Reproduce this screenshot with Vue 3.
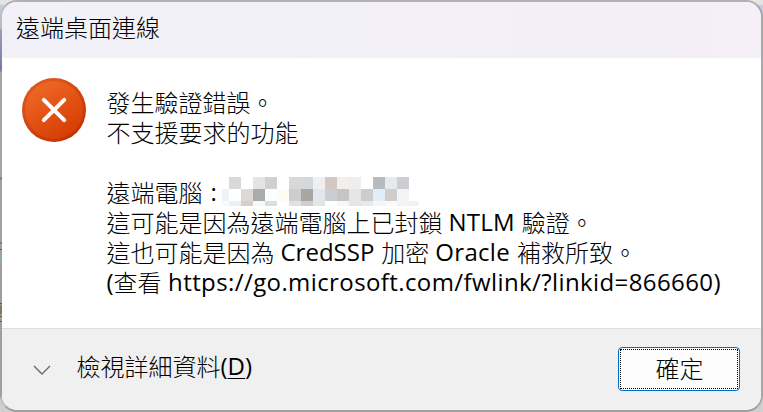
<script setup>
const mosaic = [
  ['#fff', '#d8d9db', '#fff', '#e4e4e4', '#cfd0d2', '#fff', '#d9d8d7', '#d5d8db', '#efefef', '#d3c8c3', '#f2f0ee', '#eeeeee', '#fff', '#b7bbbf', '#e8e9eb', '#cdced1', '#fff'],
  ['#eef3f7', '#fff', '#dbdad6', '#a9abad', '#fafeff', '#fffaf2', '#cbcdcf', '#a9a6a0', '#e1e7ec', '#cbcdd0', '#c6c5c1', '#e6e6e6', '#cccdcf', '#e0eef7', '#cfcec9', '#f2f3f4', '#fff'],
  ['#fafafa', '#edf1f4', '#d5d0ce', '#f8f8fa', '#dddddd', '#fff', '#e3e0df', '#cfd0cd', '#e2e4e6', '#fff', '#f7f7f7', '#e6e6e6', '#e9e9e9', '#f5f5f6', '#fafafa', '#f3f4f5', '#f2f2f2'],
].flat()
</script>

<template>
  <div class="desktop">
    <section class="dialog" role="alertdialog">
      <header class="titlebar">遠端桌面連線</header>
      <main class="body">
        <svg class="error-icon" viewBox="0 0 64 64">
          <defs>
            <linearGradient id="disc" x1="0.2" y1="0" x2="0.8" y2="1">
              <stop offset="0" stop-color="#ef6a28" />
              <stop offset="1" stop-color="#d63a00" />
            </linearGradient>
            <linearGradient id="rim" x1="0.2" y1="0" x2="0.8" y2="1">
              <stop offset="0" stop-color="#df5b20" />
              <stop offset="1" stop-color="#bf3003" />
            </linearGradient>
          </defs>
          <circle cx="32" cy="32" r="32" fill="url(#rim)" />
          <circle cx="32" cy="32" r="29" fill="url(#disc)" />
          <path d="M21.8 21.8 42.2 42.2M42.2 21.8 21.8 42.2" stroke="#fff" stroke-width="4" stroke-linecap="round" />
        </svg>
        <div class="message">
          <p>發生驗證錯誤<span class="stop">。</span></p>
          <p>不支援要求的功能</p>
          <p></p>
          <p>遠端電腦<span class="latin colon">:</span><span class="mosaic"><i v-for="(c, i) in mosaic" :key="i" :style="{ background: c }"></i></span></p>
          <p>這可能是因為遠端電腦上已封鎖<span class="latin ntlm">NTLM</span>驗證<span class="stop">。</span></p>
          <p>這也可能是因為<span class="latin cred">CredSSP</span>加密<span class="latin oracle">Oracle</span>補救所致<span class="stop">。</span></p>
          <p><span class="latin">(</span>查看<span class="latin url">https://go.microsoft.com/fwlink/?linkid=866660)</span></p>
        </div>
      </main>
      <footer class="footer">
        <svg class="chevron" viewBox="0 0 18 10"><path d="M1 1 9 9 17 1" /></svg>
        <span class="details">檢視詳細資料<span class="latin">(<u>D</u>)</span></span>
        <button class="ok"><span>確定</span></button>
      </footer>
    </section>
  </div>
</template>

<style>
body { overflow: hidden; }
</style>

<style scoped>
.desktop {
  box-sizing: border-box;
  width: 763px;
  height: 412px;
  background:
    linear-gradient(#e4e4e4 4px, #c4ccda 5px 28px, #9a9dc4 30px, #6068a8 70px, #a9a9a9 73px 177px, #777 177px 180px, #a2a2a2 180px 242px, #5a62a0 242px 244px, #a0a0a0 244px 249px, #333 249px 250px, #a0a0a0 250px 253px, #7eb0b4 253px 262px, #9c9c9c 262px 303px, #333 303px 304px, #888 304px 306px, #7a6030 306px 314px, #999 314px 316px, #333 316px 317px, #9c9c9c 317px 321px, #333 321px 322px, #a0a0a0 322px 395px, #cfcfcf 400px) left / 2px 100% no-repeat,
    linear-gradient(#e4e4e4 0 4px, #c5cbd8 6px 18px, #b4b4b4 80px, #aaa 360px, #cfcfcf 400px);
}
.dialog {
  box-sizing: border-box;
  width: 763px;
  height: 412px;
  display: flex;
  flex-direction: column;
  border: 2px solid #a8a8a8;
  border-top-color: #b1b1b1;
  border-bottom-color: #a0a0a0;
  border-left-color: rgba(160, 160, 160, 0.35);
  border-radius: 17px;
  overflow: hidden;
  background: #fff;
  background-clip: padding-box;
  color: #000;
  font: 300 24px/30px "Noto Sans CJK TC", sans-serif;
}
.titlebar {
  box-sizing: border-box;
  height: 56px;
  padding: 10px 0 0 14px;
  background: linear-gradient(90deg, #f2f1f8, #f3eff7 80%, #f5eff6);
}
.body {
  box-sizing: border-box;
  height: 270px;
  display: flex;
  align-items: flex-start;
  padding: 20px 0 0 20px;
}
.error-icon { width: 64px; height: 64px; flex: none; }
.message { margin: 9px 0 0 20.5px; }
p {
  height: 30px;
  margin: 0;
  display: flex;
  white-space: pre;
}
.stop { display: block; width: 24px; }
.colon {
  box-sizing: border-box;
  width: 19.5px;
  padding-left: 8px;
}
.mosaic {
  display: grid;
  grid-template-columns: 7px repeat(15, 12px) 10px;
  grid-template-rows: 12px 12px 5px;
}
.latin {
  display: block;
  font: 400 24px/30px "Open Sans", "Noto Sans", sans-serif;
}
.ntlm { margin: 0 7px 0 6px; letter-spacing: 0.2px; }
.cred { margin: 0 7px 0 6px; }
.oracle { margin: 0 7px 0 6px; letter-spacing: 0.3px; }
.url { margin-left: 6.5px; letter-spacing: 0.4px; }
.footer {
  box-sizing: border-box;
  flex: 1;
  display: flex;
  align-items: flex-start;
  background: #f0f0f0;
  border-top: 1px solid #dfdfdf;
}
.chevron { width: 18px; height: 10px; margin: 36px 0 0 31px; }
.chevron path { fill: none; stroke: #6b6b6b; stroke-width: 1.4; }
.details { display: flex; margin: 22px 0 0 25.5px; }
u { text-decoration: underline; text-decoration-thickness: 1px; text-underline-offset: 3px; }
.ok {
  box-sizing: border-box;
  width: 122px;
  height: 44px;
  margin: 18px 21px 0 auto;
  padding: 1px;
  border: 1px solid #0070cc;
  border-radius: 4px;
  background: #fdfdfd;
  color: #000;
  font: inherit;
}
.ok span {
  box-sizing: border-box;
  display: block;
  height: 40px;
  padding: 3px 0 0 1px;
  border: 1px dotted #000;
}
</style>
